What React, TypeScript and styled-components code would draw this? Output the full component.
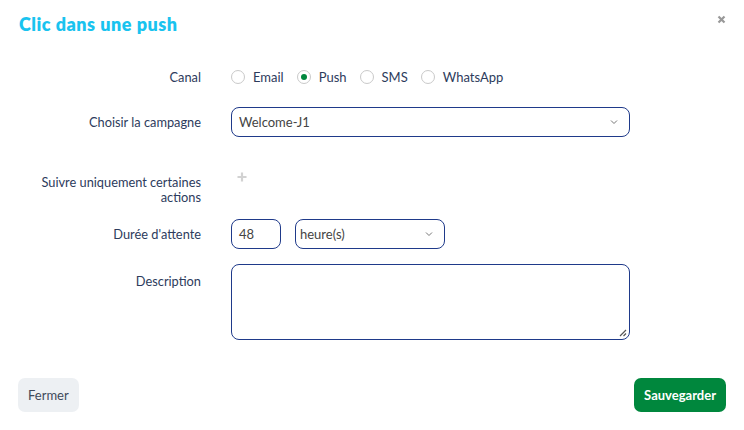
import React from 'react';
import styled, { createGlobalStyle } from 'styled-components';

const GlobalStyle = createGlobalStyle`
  html, body {
    margin: 0;
    padding: 0;
    background: #ffffff;
  }
  body {
    font-family: Lato, "Noto Sans", sans-serif;
  }
`;

const Modal = styled.div`
  width: 744px;
  height: 430px;
  box-sizing: border-box;
  background: #ffffff;
  display: flex;
  flex-direction: column;
`;

const Header = styled.div`
  position: relative;
  padding: 12px 19px 0 19px;
  height: 55px;
  box-sizing: border-box;
`;

const Title = styled.h2`
  margin: 0;
  font-size: 18px;
  line-height: 24px;
  font-weight: 800;
  color: #19c3ef;
  letter-spacing: 0.5px;
`;

const CloseButton = styled.button`
  position: absolute;
  top: 13px;
  right: 17px;
  width: 12px;
  height: 12px;
  padding: 0;
  border: none;
  background: transparent;
  cursor: pointer;
  display: flex;
  align-items: center;
  justify-content: center;
`;

const Form = styled.div`
  display: flex;
  flex-direction: column;
  padding-top: 12px;
`;

const Row = styled.div<{ $top?: number; $align?: string }>`
  display: grid;
  grid-template-columns: 201px 399px;
  column-gap: 30px;
  align-items: ${(p) => p.$align || 'center'};
  margin-top: ${(p) => p.$top || 0}px;
`;

const Label = styled.label<{ $pad?: number }>`
  text-align: right;
  font-size: 12.8px;
  line-height: 15px;
  color: #2d3b5c;
  padding-left: 40px;
  padding-top: ${(p) => p.$pad || 0}px;
`;

const Radios = styled.div`
  display: flex;
  align-items: center;
  gap: 13px;
  height: 20px;
`;

const RadioOption = styled.label`
  display: flex;
  align-items: center;
  gap: 8px;
  font-size: 13px;
  color: #2d3b5c;
  cursor: pointer;
`;

const RadioCircle = styled.span<{ $checked?: boolean }>`
  width: 12px;
  height: 12px;
  border-radius: 50%;
  border: 1px solid #c9c9c9;
  display: flex;
  align-items: center;
  justify-content: center;
  background: #fff;

  &::after {
    content: '';
    width: 6px;
    height: 6px;
    border-radius: 50%;
    background: ${(p) => (p.$checked ? '#00873d' : 'transparent')};
  }
`;

const Field = styled.div<{ $width?: number; $padLeft?: number }>`
  position: relative;
  height: 30px;
  width: ${(p) => (p.$width ? `${p.$width}px` : '100%')};
  box-sizing: border-box;
  border: 1px solid #1f3a8a;
  border-radius: 8px;
  display: flex;
  align-items: center;
  padding: 0 7px 0 ${(p) => p.$padLeft ?? 7}px;
  font-size: 13px;
  color: #444;
`;

const Chevron = styled.span`
  position: absolute;
  right: 11px;
  top: 11px;
  display: flex;
`;

const InlineFields = styled.div`
  display: flex;
  gap: 14px;
`;

const PlusIcon = styled.span`
  display: flex;
  padding-left: 6px;
  align-self: start;
  margin-top: -3px;
`;

const TextArea = styled.div`
  position: relative;
  height: 76px;
  box-sizing: border-box;
  border: 1px solid #1f3a8a;
  border-radius: 8px;
`;

const Grip = styled.span`
  position: absolute;
  right: 2px;
  bottom: 2px;
  display: flex;
`;

const Footer = styled.div`
  margin-top: auto;
  display: flex;
  justify-content: space-between;
  align-items: center;
  padding: 0 18px 18px 18px;
`;

const Button = styled.button<{ $primary?: boolean }>`
  height: 34px;
  border: none;
  border-radius: 7px;
  padding: 0 10px;
  font-family: Lato, "Noto Sans", sans-serif;
  font-size: 13px;
  font-weight: ${(p) => (p.$primary ? 700 : 400)};
  background: ${(p) => (p.$primary ? '#00873d' : '#edf0f3')};
  color: ${(p) => (p.$primary ? '#ffffff' : '#3f4a5a')};
  cursor: pointer;
`;

const ChevronDown = () => (
  <svg width="8" height="6" viewBox="0 0 8 6">
    <path d="M1 1.5 L4 4.5 L7 1.5" fill="none" stroke="#777" strokeWidth="1" />
  </svg>
);

const channels = ['Email', 'Push', 'SMS', 'WhatsApp'];

export default function App() {
  return (
    <>
      <GlobalStyle />
      <Modal>
        <Header>
          <Title>Clic dans une push</Title>
          <CloseButton aria-label="Fermer">
            <svg width="9" height="9" viewBox="0 0 9 9">
              <path d="M1.5 1.5 L7.5 7.5 M7.5 1.5 L1.5 7.5" stroke="#999" strokeWidth="2.2" />
            </svg>
          </CloseButton>
        </Header>
        <Form>
          <Row>
            <Label>Canal</Label>
            <Radios>
              {channels.map((c) => (
                <RadioOption key={c}>
                  <RadioCircle $checked={c === 'Push'} />
                  {c}
                </RadioOption>
              ))}
            </Radios>
          </Row>
          <Row $top={20}>
            <Label>Choisir la campagne</Label>
            <Field>
              Welcome-J1
              <Chevron>
                <ChevronDown />
              </Chevron>
            </Field>
          </Row>
          <Row $top={38} $align="start">
            <Label>Suivre uniquement certaines actions</Label>
            <PlusIcon>
              <svg width="10" height="10" viewBox="0 0 10 10">
                <path d="M5 0.5 V9.5 M0.5 5 H9.5" stroke="#d2d2d2" strokeWidth="2.2" />
              </svg>
            </PlusIcon>
          </Row>
          <Row $top={14}>
            <Label>Durée d'attente</Label>
            <InlineFields>
              <Field $width={50}>48</Field>
              <Field $width={150} $padLeft={4}>
                heure(s)
                <Chevron>
                  <ChevronDown />
                </Chevron>
              </Field>
            </InlineFields>
          </Row>
          <Row $top={15} $align="start">
            <Label $pad={10}>Description</Label>
            <TextArea>
              <Grip>
                <svg width="9" height="9" viewBox="0 0 9 9">
                  <path d="M8 2 L2 8 M8 5.5 L5.5 8" stroke="#555" strokeWidth="1.2" />
                </svg>
              </Grip>
            </TextArea>
          </Row>
        </Form>
        <Footer>
          <Button>Fermer</Button>
          <Button $primary>Sauvegarder</Button>
        </Footer>
      </Modal>
    </>
  );
}
